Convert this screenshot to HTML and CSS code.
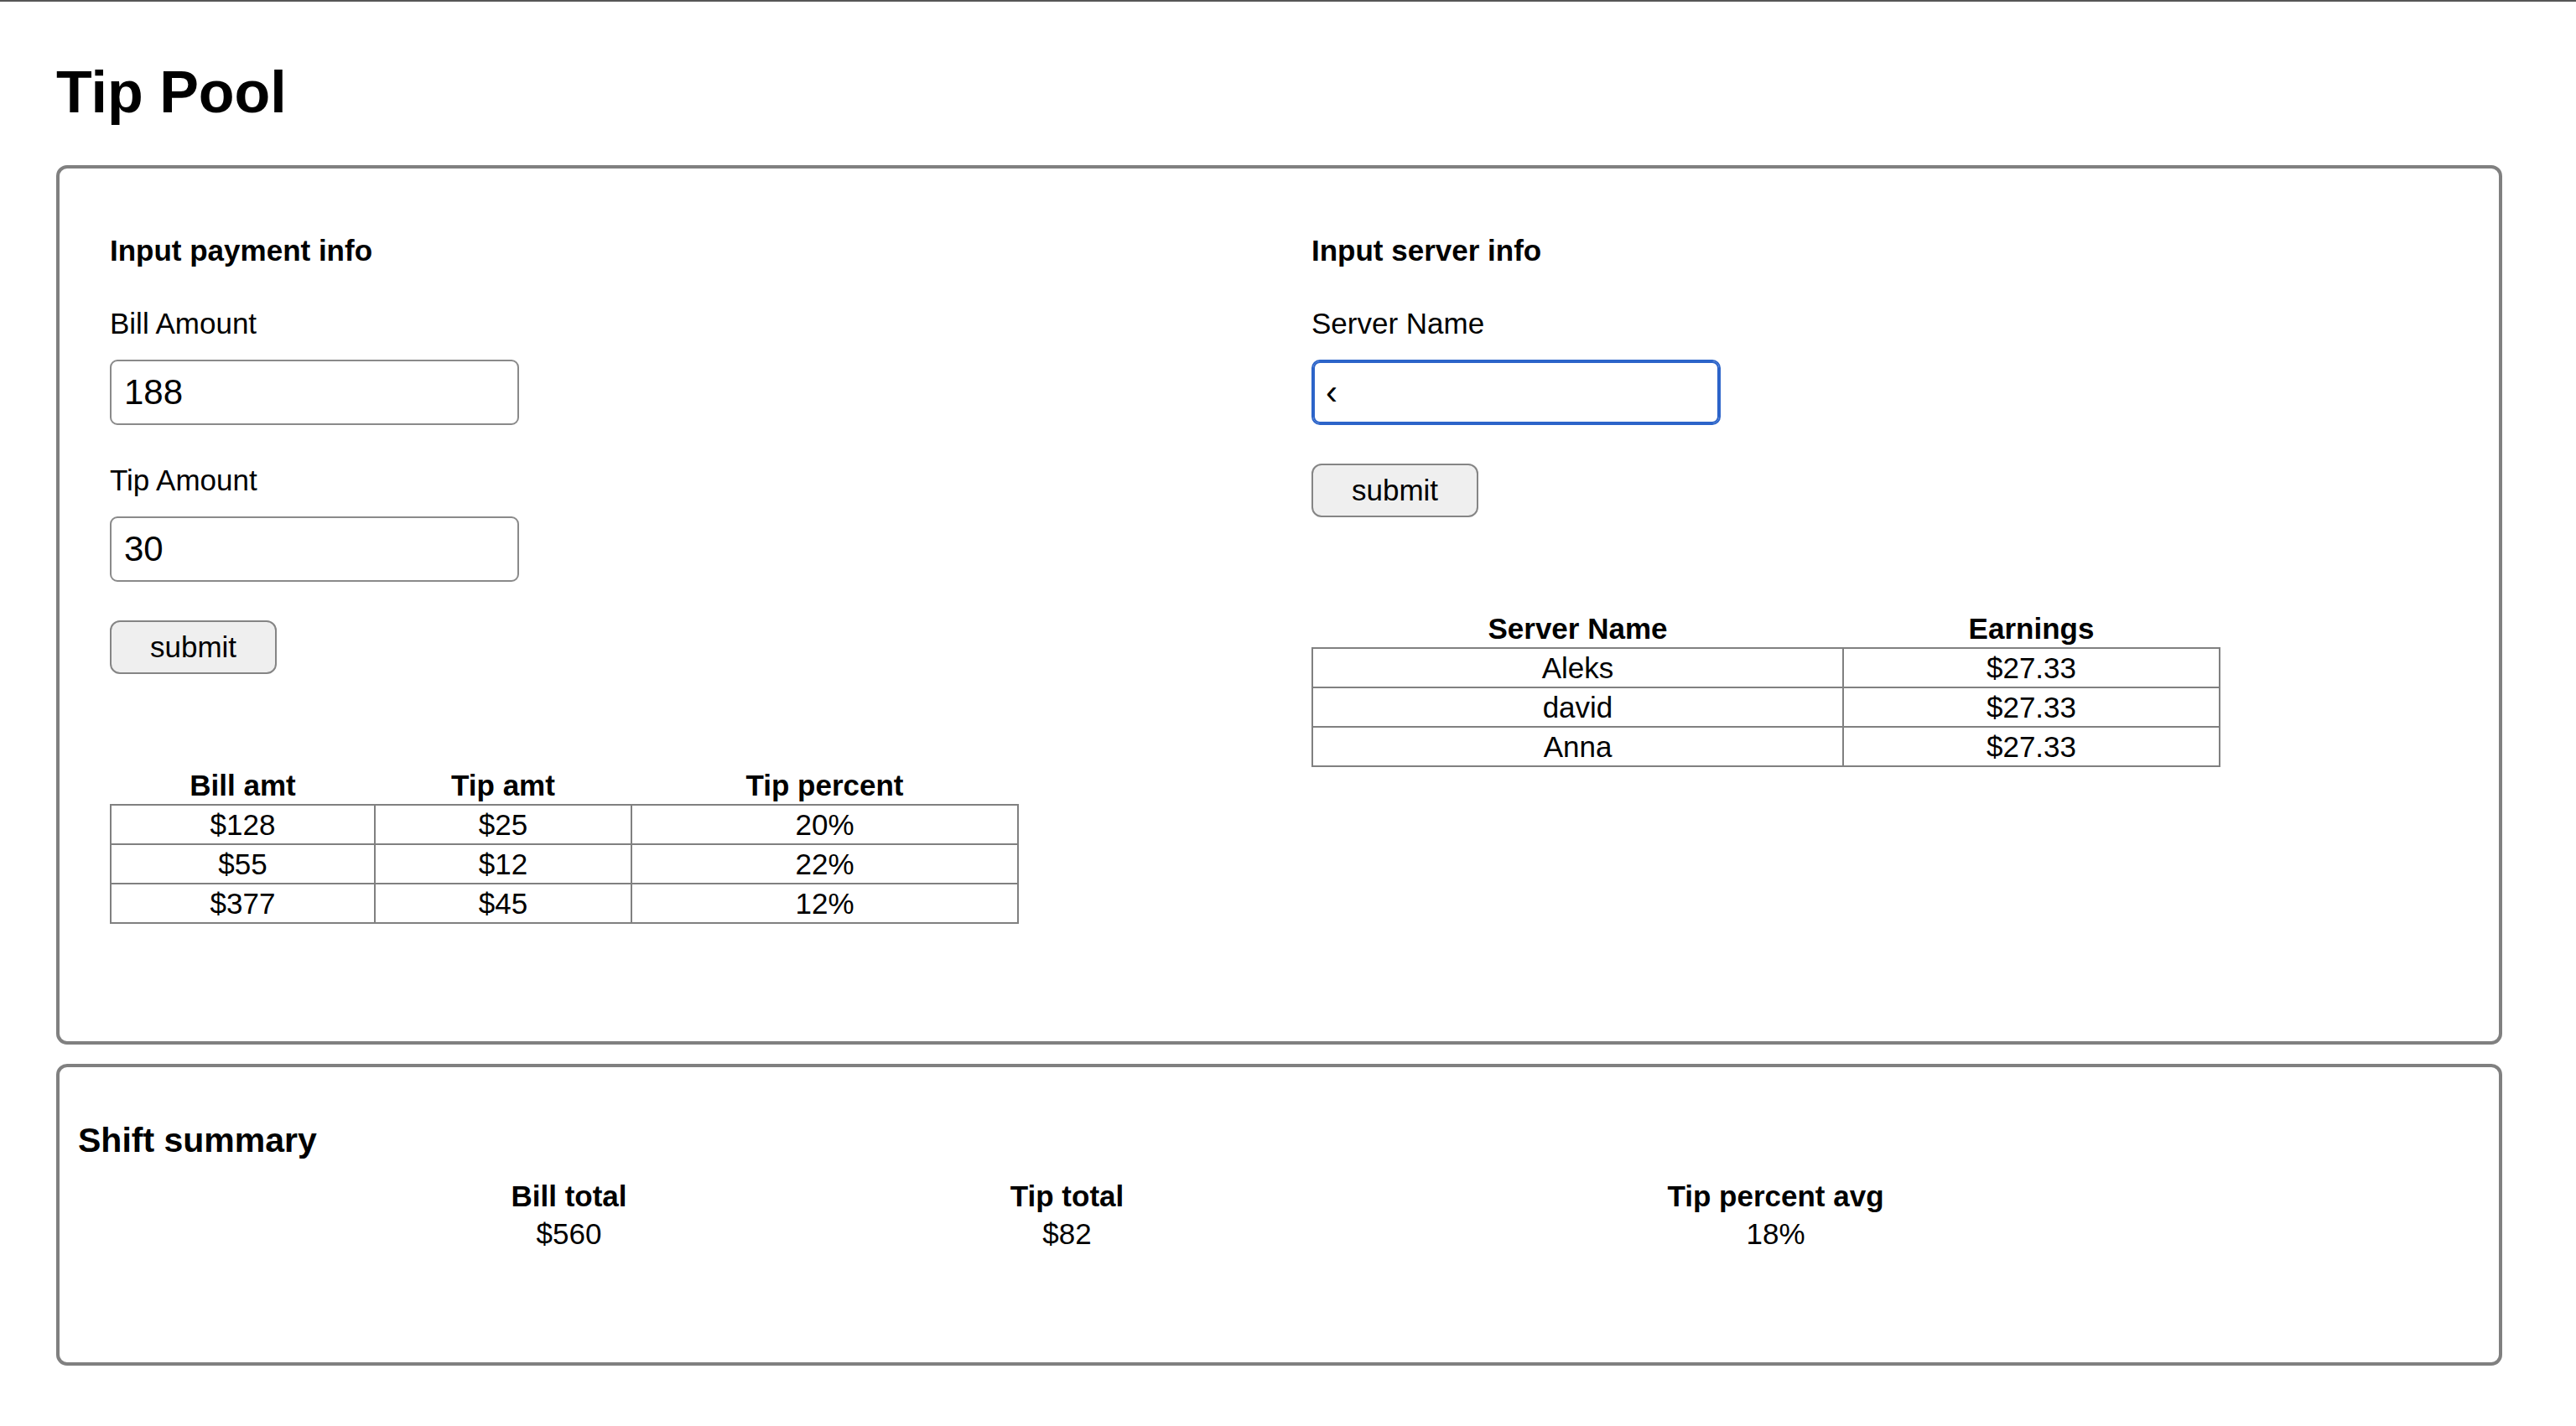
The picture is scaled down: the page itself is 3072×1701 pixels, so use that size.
FILE: index.html
```html
<!DOCTYPE html>
<html lang="en">
<head>
<meta charset="utf-8">
<title>Tip Pool</title>
<link rel="stylesheet" href="styles.css">
</head>
<body>
<div class="topbar"></div>
<main class="page">
  <h1 class="title">Tip Pool</h1>

  <section class="card card-input">
    <div class="col">
      <h4 class="section-title">Input payment info</h4>
      <label class="field-label">Bill Amount</label>
      <input class="field" type="text" value="188">
      <label class="field-label field-label-next">Tip Amount</label>
      <input class="field" type="text" value="30">
      <button class="submit" type="button">submit</button>
      <table class="data-table">
        <colgroup>
          <col class="c-bill">
          <col class="c-tip">
          <col class="c-pct">
        </colgroup>
        <thead>
          <tr><th>Bill amt</th><th>Tip amt</th><th>Tip percent</th></tr>
        </thead>
        <tbody>
          <tr><td>$128</td><td>$25</td><td>20%</td></tr>
          <tr><td>$55</td><td>$12</td><td>22%</td></tr>
          <tr><td>$377</td><td>$45</td><td>12%</td></tr>
        </tbody>
      </table>
    </div>

    <div class="col">
      <h4 class="section-title">Input server info</h4>
      <label class="field-label">Server Name</label>
      <input class="field field-focus" type="text" value="‹">
      <button class="submit" type="button">submit</button>
      <table class="data-table">
        <colgroup>
          <col class="c-name">
          <col class="c-earn">
        </colgroup>
        <thead>
          <tr><th>Server Name</th><th>Earnings</th></tr>
        </thead>
        <tbody>
          <tr><td>Aleks</td><td>$27.33</td></tr>
          <tr><td>david</td><td>$27.33</td></tr>
          <tr><td>Anna</td><td>$27.33</td></tr>
        </tbody>
      </table>
    </div>
  </section>

  <section class="card card-summary">
    <h3 class="summary-title">Shift summary</h3>
    <table class="summary-table">
      <colgroup>
        <col class="s-bill">
        <col class="s-tip">
        <col class="s-pct">
      </colgroup>
      <thead>
        <tr><th>Bill total</th><th>Tip total</th><th>Tip percent avg</th></tr>
      </thead>
      <tbody>
        <tr><td>$560</td><td>$82</td><td>18%</td></tr>
      </tbody>
    </table>
  </section>
</main>
</body>
</html>
```

FILE: styles.css
```css
* {
  box-sizing: border-box;
}

html, body {
  margin: 0;
  padding: 0;
  background: #ffffff;
}

body {
  font-family: "Liberation Sans", Arial, Helvetica, sans-serif;
  font-size: 35px;
  line-height: 40px;
  color: #000000;
}

.topbar {
  height: 2px;
  background: #565656;
}

.page {
  padding: 0 0 0 67px;
}

.title {
  margin: 68px 0 47px 0;
  font-size: 70px;
  line-height: 80px;
  font-weight: bold;
}

.card {
  width: 2917px;
  border: 4px solid #808080;
  border-radius: 13px;
}

.card-input {
  display: grid;
  grid-template-columns: 1433px 1fr;
  padding: 78px 0 140px 60px;
}

.col {
  display: flex;
  flex-direction: column;
  align-items: flex-start;
}

.section-title {
  margin: 0;
  font-size: 35px;
  line-height: 40px;
  font-weight: bold;
}

.field-label {
  display: block;
  margin-top: 47px;
}

.field {
  margin-top: 23px;
  width: 488px;
  height: 78px;
  padding: 13px 15px;
  border: 2px solid #8a8a8a;
  border-radius: 9px;
  font-family: "Liberation Sans", Arial, Helvetica, sans-serif;
  font-size: 42px;
  line-height: 48px;
  color: #000000;
  background: #ffffff;
  outline: none;
}

.field-focus {
  border: 2px solid #2c64c9;
  box-shadow: inset 0 0 0 2px #2c64c9;
  border-radius: 10px;
}

.field-label-next {
  margin-top: 46px;
}

.submit {
  margin-top: 46px;
  height: 64px;
  padding: 10px 46px;
  border: 2px solid #858585;
  border-radius: 12px;
  background: #efefef;
  font-family: "Liberation Sans", Arial, Helvetica, sans-serif;
  font-size: 35px;
  line-height: 40px;
  color: #000000;
}

.data-table {
  margin-top: 110px;
  width: 1082px;
  table-layout: fixed;
  border-collapse: collapse;
}

.data-table th,
.data-table td {
  padding: 2px 0;
  text-align: center;
  font-size: 35px;
  line-height: 41px;
}

.data-table th {
  font-weight: bold;
  border: none;
}

.data-table td {
  border: 2px solid #808080;
}

.c-bill { width: 315px; }
.c-tip { width: 306px; }
.c-pct { width: 461px; }
.c-name { width: 633px; }
.c-earn { width: 449px; }

.card-summary {
  margin-top: 23px;
  padding: 64px 22px 131px 22px;
}

.summary-title {
  margin: 0;
  font-size: 41px;
  line-height: 47px;
  font-weight: bold;
}

.summary-table {
  margin: 20px 0 0 283px;
  width: 2295px;
  table-layout: fixed;
  border-collapse: collapse;
}

.summary-table th,
.summary-table td {
  padding: 2px 0;
  text-align: center;
  font-size: 35px;
  line-height: 41px;
}

.summary-table th {
  font-weight: bold;
}

.s-bill { width: 605px; }
.s-tip { width: 583px; }
.s-pct { width: 1107px; }
```
